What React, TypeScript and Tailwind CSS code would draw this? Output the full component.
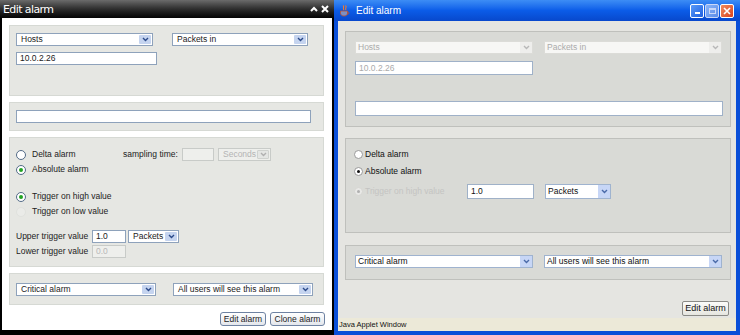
import React from "react";

const Chevron = ({ color = "#2b4a8a" }: { color?: string }) => (
  <svg width="7" height="5" viewBox="0 0 7 5">
    <path d="M1 1 L3.5 3.5 L6 1" stroke={color} strokeWidth="1.4" fill="none" />
  </svg>
);

const LSelect = ({ text, w, disabled }: { text: string; w: string; disabled?: boolean }) => (
  <div
    className={`${w} h-[13px] flex items-center justify-between border ${
      disabled ? "border-[#c8cbc8] bg-[#eeefec] text-[#b4b4b4]" : "border-[#8ea2bb] bg-white text-[#222]"
    }`}
  >
    <span className="pl-[4px] leading-none">{text}</span>
    <span
      className={`w-[12px] h-[9px] mr-[1px] flex items-center justify-center rounded-[1px] ${
        disabled ? "bg-[#e4e6e4] border border-[#cfd2cf]" : "bg-[#c5d4ef]"
      }`}
    >
      <Chevron color={disabled ? "#b0b0b0" : "#2b4a8a"} />
    </span>
  </div>
);

const LInput = ({ text, w, disabled }: { text?: string; w: string; disabled?: boolean }) => (
  <div
    className={`${w} h-[13px] flex items-center border ${
      disabled ? "border-[#c8cbc8] bg-[#eeefec] text-[#b8b8b8]" : "border-[#8ea2bb] bg-white text-[#222]"
    }`}
  >
    <span className="pl-[3px] leading-none">{text}</span>
  </div>
);

const LRadio = ({ checked, disabled }: { checked?: boolean; disabled?: boolean }) => (
  <span
    className={`w-[10px] h-[10px] rounded-full border flex items-center justify-center ${
      disabled ? "border-[#e0e2de] bg-[#eaebe8]" : "border-[#536b87] bg-white"
    }`}
  >
    {checked && <span className="w-[4px] h-[4px] rounded-full bg-[#23a323]" />}
  </span>
);

const LButton = ({ text, w }: { text: string; w: string }) => (
  <div
    className={`${w} h-[14px] flex items-center justify-center border border-[#6e82a2] rounded-[3px] bg-gradient-to-b from-white to-[#e3e6ec] text-[#222] leading-none`}
  >
    {text}
  </div>
);

const RSelect = ({ text, w, disabled }: { text: string; w: string; disabled?: boolean }) => (
  <div
    className={`${w} h-[13px] flex items-center justify-between border ${
      disabled ? "border-[#dcdcd8] bg-[#f7f7f5] text-[#ababab]" : "border-[#9fb3cf] bg-white text-[#111]"
    }`}
  >
    <span className="pl-[2px] leading-none">{text}</span>
    <span
      className={`w-[12px] h-[11px] flex items-center justify-center ${
        disabled ? "bg-[#eeeeec]" : "bg-[#c7d6f6]"
      }`}
    >
      <Chevron color={disabled ? "#b8b8b8" : "#4a6aa8"} />
    </span>
  </div>
);

const RInput = ({ text, w, h, disabled }: { text?: string; w: string; h: string; disabled?: boolean }) => (
  <div
    className={`${w} ${h} flex items-center border border-[#9fb1c8] bg-white ${
      disabled ? "text-[#aaaaaa]" : "text-[#111]"
    }`}
  >
    <span className="pl-[3px] leading-none">{text}</span>
  </div>
);

const RRadio = ({ checked, disabled }: { checked?: boolean; disabled?: boolean }) => (
  <span
    className={`w-[9px] h-[9px] rounded-full border flex items-center justify-center ${
      disabled ? "border-[#d6d6d2] bg-[#e8e8e6]" : "border-[#9a9a9a] bg-white"
    }`}
  >
    {checked && <span className={`w-[3px] h-[3px] rounded-full ${disabled ? "bg-[#b0b0b0]" : "bg-[#111]"}`} />}
  </span>
);

export default function App() {
  return (
    <div className="flex w-[740px] h-[335px] bg-black overflow-hidden">
      {/* Left web dialog */}
      <div className="w-[334px] h-[335px] bg-black flex flex-col font-['Liberation_Sans',Arial,sans-serif] text-[8.5px]">
        <div className="h-[18px] flex items-center justify-between bg-gradient-to-b from-[#6b6b6b] via-[#2e2e2e] to-[#050505] px-[3px]">
          <span className="text-white text-[11px] leading-none font-['DejaVu_Sans',sans-serif] tracking-[-0.6px]">Edit alarm</span>
          <span className="flex items-center gap-[3px] pr-[2px] text-white">
            <svg width="8" height="6" viewBox="0 0 8 6">
              <path d="M1 5 L4 2 L7 5" stroke="white" strokeWidth="2" fill="none" />
            </svg>
            <svg width="8" height="8" viewBox="0 0 8 8">
              <path d="M1 1 L7 7 M7 1 L1 7" stroke="white" strokeWidth="2" />
            </svg>
          </span>
        </div>
        <div className="ml-[2px] mr-[2px] h-[312px] bg-white flex flex-col pl-[7px] pr-[8px] pt-[7px]">
          {/* panel 1 */}
          <div className="h-[71px] bg-[#e6e7e3] border border-[#d6d9d4] pl-[6px] pt-[7px] flex flex-col gap-[6px]">
            <div className="flex gap-[19px]">
              <LSelect text="Hosts" w="w-[137px]" />
              <LSelect text="Packets in" w="w-[136px]" />
            </div>
            <LInput text="10.0.2.26" w="w-[141px]" />
          </div>
          {/* panel 2 */}
          <div className="mt-[6px] h-[29px] bg-[#e6e7e3] border border-[#d6d9d4] pl-[6px] pr-[12px] pt-[7px]">
            <LInput w="w-full" />
          </div>
          {/* panel 3 */}
          <div className="mt-[6px] h-[130px] bg-[#e6e7e3] border border-[#d6d9d4] pl-[6px] pt-[9px] flex flex-col text-[#222]">
            <div className="h-[15px] flex items-center">
              <LRadio />
              <span className="ml-[6px] w-[91px] leading-none">Delta alarm</span>
              <span className="w-[59px] leading-none">sampling time:</span>
              <LInput w="w-[32px]" disabled />
              <div className="ml-[4px]">
                <LSelect text="Seconds" w="w-[53px]" disabled />
              </div>
            </div>
            <div className="h-[15px] flex items-center">
              <LRadio checked />
              <span className="ml-[6px] leading-none">Absolute alarm</span>
            </div>
            <div className="mt-[12px] h-[15px] flex items-center">
              <LRadio checked />
              <span className="ml-[6px] leading-none">Trigger on high value</span>
            </div>
            <div className="h-[15px] flex items-center">
              <LRadio disabled />
              <span className="ml-[6px] leading-none">Trigger on low value</span>
            </div>
            <div className="mt-[11px] h-[13px] flex items-center">
              <span className="w-[76px] leading-none">Upper trigger value</span>
              <LInput text="1.0" w="w-[34px]" />
              <div className="ml-[2px]">
                <LSelect text="Packets" w="w-[51px]" />
              </div>
            </div>
            <div className="mt-[2px] h-[13px] flex items-center">
              <span className="w-[76px] leading-none">Lower trigger value</span>
              <LInput text="0.0" w="w-[34px]" disabled />
            </div>
          </div>
          {/* panel 4 */}
          <div className="mt-[6px] h-[32px] bg-[#e6e7e3] border border-[#d6d9d4] pl-[6px] pt-[9px] flex gap-[17px]">
            <LSelect text="Critical alarm" w="w-[140px]" />
            <LSelect text="All users will see this alarm" w="w-[140px]" />
          </div>
          <div className="mt-[7px] flex justify-end gap-[4px] mr-[-1px]">
            <LButton text="Edit alarm" w="w-[46px]" />
            <LButton text="Clone alarm" w="w-[55px]" />
          </div>
        </div>
      </div>

      {/* Right Java applet window */}
      <div className="w-[406px] h-[335px] flex flex-col bg-[#0a4fd8] font-['Liberation_Sans',Arial,sans-serif] text-[8.5px]">
        <div className="h-[21px] flex items-center bg-gradient-to-b from-[#3d8df5] via-[#0b5ce8] to-[#0848cc] pl-[5px] pr-[6px]">
          <svg width="11" height="12" viewBox="0 0 11 12">
            <path d="M4 0.5 C6 2 3 3 5 5 M6.5 0.5 C8.5 2 5.5 3 7 5" stroke="#f07a30" strokeWidth="1.1" fill="none" />
            <path d="M1.5 6 H8.5 V8 C8.5 10 7 11 5 11 C3 11 1.5 10 1.5 8 Z" fill="#7a8fc4" stroke="#c0502a" strokeWidth="0.8" />
            <path d="M8.5 7 C10.5 7 10.5 9 8 9.5" stroke="#c0502a" strokeWidth="0.9" fill="none" />
          </svg>
          <span className="ml-[6px] text-white text-[10px] leading-none">Edit alarm</span>
          <div className="ml-auto flex gap-[1px]">
            <div className="w-[14px] h-[14px] rounded-[2px] border border-white bg-gradient-to-br from-[#5a9af8] to-[#1f5fe0] flex items-end justify-center pb-[3px]">
              <div className="w-[5px] h-[2px] bg-white" />
            </div>
            <div className="w-[14px] h-[14px] rounded-[2px] border border-[#c9d8f8] bg-gradient-to-br from-[#8ab4f8] to-[#5b8de8] flex items-center justify-center">
              <div className="w-[7px] h-[6px] border border-[#c9d8f8] border-t-2" />
            </div>
            <div className="w-[14px] h-[14px] rounded-[2px] border border-white bg-gradient-to-br from-[#f08a5c] to-[#d8401c] flex items-center justify-center">
              <svg width="8" height="8" viewBox="0 0 8 8">
                <path d="M1 1 L7 7 M7 1 L1 7" stroke="white" strokeWidth="1.6" />
              </svg>
            </div>
          </div>
        </div>
        <div className="mx-[4px] h-[310px] bg-[#e5e5e1] flex flex-col">
          <div className="flex-1 flex flex-col pl-[7px] pr-[5px] pt-[10px]">
            {/* panel 1 */}
            <div className="h-[96px] bg-[#d9dad6] border border-[#bfc0bc] pl-[9px] pr-[8px] pt-[9px] flex flex-col">
              <div className="flex gap-[11px]">
                <RSelect text="Hosts" w="w-[178px]" disabled />
                <RSelect text="Packets in" w="w-[178px]" disabled />
              </div>
              <div className="mt-[7px]">
                <RInput text="10.0.2.26" w="w-[178px]" h="h-[14px]" disabled />
              </div>
              <div className="mt-[26px]">
                <RInput w="w-[368px]" h="h-[15px]" />
              </div>
            </div>
            {/* panel 2 */}
            <div className="mt-[11px] h-[95px] bg-[#d9dad6] border border-[#bfc0bc] pl-[8px] pt-[8px] flex flex-col text-[#111]">
              <div className="h-[14px] flex items-center">
                <RRadio />
                <span className="ml-[2px] leading-none">Delta alarm</span>
              </div>
              <div className="mt-[3px] h-[14px] flex items-center">
                <RRadio checked />
                <span className="ml-[2px] leading-none">Absolute alarm</span>
              </div>
              <div className="mt-[6px] h-[15px] flex items-center">
                <div className="w-[113px] flex items-center">
                  <RRadio checked disabled />
                  <span className="ml-[2px] leading-none text-[#c4c4c2]">Trigger on high value</span>
                </div>
                <RInput text="1.0" w="w-[67px]" h="h-[15px]" />
                <div className="ml-[11px]">
                  <div className="w-[66px] h-[15px] flex items-center justify-between border border-[#9fb3cf] bg-white">
                    <span className="pl-[2px] leading-none">Packets</span>
                    <span className="w-[12px] h-[13px] flex items-center justify-center bg-[#c7d6f6]">
                      <Chevron color="#4a6aa8" />
                    </span>
                  </div>
                </div>
              </div>
            </div>
            {/* panel 3 */}
            <div className="mt-[12px] h-[35px] bg-[#d9dad6] border border-[#bfc0bc] pl-[9px] pt-[9px] flex gap-[11px]">
              <RSelect text="Critical alarm" w="w-[178px]" />
              <RSelect text="All users will see this alarm" w="w-[178px]" />
            </div>
            <div className="mt-[21px] flex justify-end pr-[2px]">
              <div className="w-[47px] h-[15px] flex items-center justify-center border border-[#8a8a86] rounded-[2px] bg-gradient-to-b from-[#fbfbf9] to-[#e6e6e0] text-[#111] text-[9px] leading-none">
                Edit alarm
              </div>
            </div>
          </div>
          <div className="h-[13px] mt-[2px] bg-[#ece9d8] flex items-center pl-[1px] text-[#111] text-[7.5px] leading-none">
            Java Applet Window
          </div>
        </div>
        <div className="h-[4px]" />
      </div>
    </div>
  );
}
